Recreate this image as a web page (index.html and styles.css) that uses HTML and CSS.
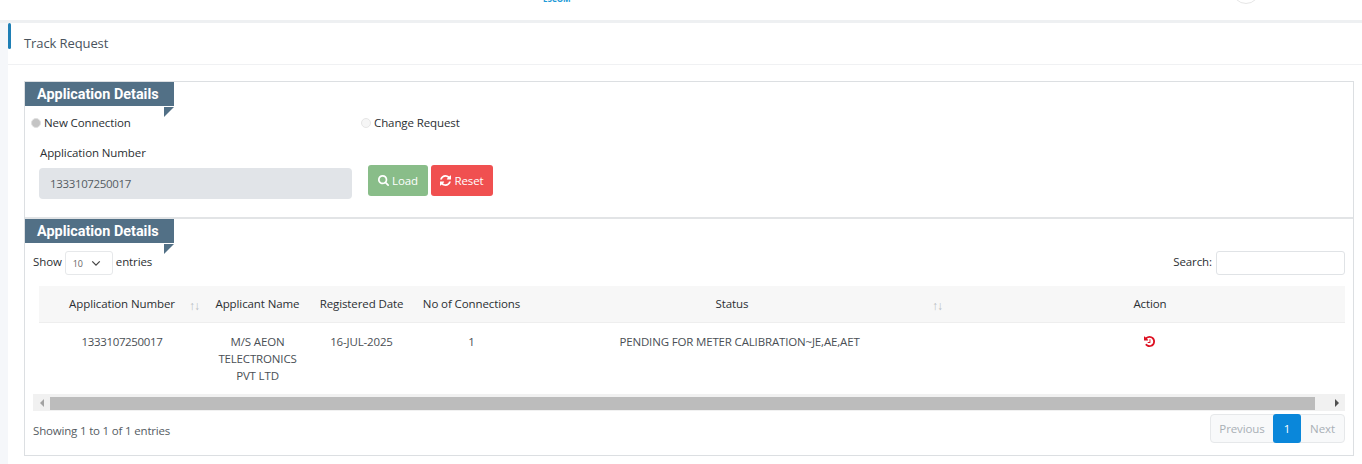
FILE: index.html
```html
<!DOCTYPE html>
<html lang="en">
<head>
    <meta charset="UTF-8">
    <meta name="viewport" content="width=device-width, initial-scale=1.0">
    <title>Track Request</title>
    <link rel="stylesheet" href="styles.css">
</head>
<body>
    <header class="topbar">
        <span class="logo-text">ESCOM</span>
        <span class="avatar"></span>
    </header>

    <div class="page">
        <main class="card">
            <div class="card-title">
                <span class="title-mark"></span>
                <h1>Track Request</h1>
            </div>

            <div class="panel">
                <section class="search-section">
                    <div class="ribbon"><h2>Application Details</h2></div>
                    <div class="radio-row">
                        <label class="radio-item radio-first"><span class="radio checked"></span>New Connection</label>
                        <label class="radio-item"><span class="radio"></span>Change Request</label>
                    </div>
                    <div class="form-row">
                        <div class="field">
                            <label class="field-label">Application Number</label>
                            <div class="field-input number-text">1333107250017</div>
                        </div>
                        <div class="actions">
                            <button class="btn btn-load">
                                <svg class="icon" viewBox="0 0 1664 1664"><path d="M1152 704q0-185-131.5-316.5t-316.5-131.5-316.5 131.5-131.5 316.5 131.5 316.5 316.5 131.5 316.5-131.5 131.5-316.5zm512 832q0 52-38 90t-90 38q-54 0-90-38l-343-342q-179 124-399 124-143 0-273.5-55.5t-225-150-150-225-55.5-273.5 55.5-273.5 150-225 225-150 273.5-55.5 273.5 55.5 225 150 150 225 55.5 273.5q0 220-124 399l343 343q37 37 37 90z"/></svg>
                                Load
                            </button>
                            <button class="btn btn-reset">
                                <svg class="icon" viewBox="0 0 1536 1536"><path d="M1511 928q0 5-1 7-64 268-268 434.5t-478 166.5q-146 0-282.5-55t-243.5-157l-129 129q-19 19-45 19t-45-19-19-45v-448q0-26 19-45t45-19h448q26 0 45 19t19 45-19 45l-137 137q71 66 161 102t187 36q134 0 250-65t186-179q11-17 53-117 8-23 30-23h192q13 0 22.5 9.5t9.5 22.5zm25-800v448q0 26-19 45t-45 19h-448q-26 0-45-19t-19-45 19-45l138-138q-148-137-349-137-134 0-250 65t-186 179q-11 17-53 117-8 23-30 23h-199q-13 0-22.5-9.5t-9.5-22.5v-7q65-268 270-434.5t480-166.5q146 0 284 55.5t245 156.5l130-129q19-19 45-19t45 19 19 45z"/></svg>
                                Reset
                            </button>
                        </div>
                    </div>
                </section>

                <section class="results-section">
                    <div class="ribbon"><h2>Application Details</h2></div>
                    <div class="table-tools">
                        <div class="length">
                            <span class="tool-text">Show</span>
                            <span class="length-select">10
                                <svg class="chevron" viewBox="0 0 12 8"><path d="M1.5 1.5 6 6l4.5-4.5"/></svg>
                            </span>
                            <span class="tool-text">entries</span>
                        </div>
                        <div class="search">
                            <label class="tool-text">Search:</label>
                            <span class="search-input"></span>
                        </div>
                    </div>

                    <div class="table-wrap">
                        <table class="data-table">
                            <thead>
                                <tr>
                                    <th class="col-number sortable">Application Number<span class="sort-arrows">↑↓</span></th>
                                    <th class="col-name">Applicant Name</th>
                                    <th class="col-date">Registered Date</th>
                                    <th class="col-count">No of Connections</th>
                                    <th class="col-status sortable">Status<span class="sort-arrows">↑↓</span></th>
                                    <th class="col-action">Action</th>
                                </tr>
                            </thead>
                            <tbody>
                                <tr>
                                    <td class="number-text">1333107250017</td>
                                    <td>M/S AEON TELECTRONICS PVT LTD</td>
                                    <td>16-JUL-2025</td>
                                    <td>1</td>
                                    <td class="status-cell">PENDING FOR METER CALIBRATION~JE,AE,AET</td>
                                    <td>
                                        <svg class="history" viewBox="0 0 1536 1536"><path d="M1536 768q0 156-61 298t-164 245-245 164-298 61q-172 0-327-72.5t-264-204.5q-7-10-6.5-22.5t8.5-20.5l137-138q10-9 25-9 16 2 23 12 73 95 179 147t225 52q104 0 198.5-40.5t163.5-109.5 109.5-163.5 40.5-198.5-40.5-198.5-109.5-163.5-163.5-109.5-198.5-40.5q-98 0-188 35.5t-160 101.5l137 138q31 30 14 69-17 40-59 40h-448q-26 0-45-19t-19-45v-448q0-42 40-59 39-17 69 14l130 129q107-101 244.5-156.5t284.5-55.5q156 0 298 61t245 164 164 245 61 298zm-640-288v448q0 14-9 23t-23 9h-320q-14 0-23-9t-9-23v-64q0-14 9-23t23-9h224v-352q0-14 9-23t23-9h64q14 0 23 9t9 23z"/></svg>
                                    </td>
                                </tr>
                            </tbody>
                        </table>
                    </div>

                    <div class="scrollbar">
                        <span class="arrow arrow-left"></span>
                        <span class="thumb"></span>
                        <span class="arrow arrow-right"></span>
                    </div>

                    <div class="table-footer">
                        <div class="info">Showing 1 to 1 of 1 entries</div>
                        <div class="pagination">
                            <a class="page-link link-prev">Previous</a>
                            <a class="page-link current">1</a>
                            <a class="page-link link-next">Next</a>
                        </div>
                    </div>
                </section>
            </div>
        </main>
    </div>
</body>
</html>
```

FILE: styles.css
```css
/* base */
html, body {
    height: 100%;
}

body {
    margin: 0;
    font-family: 'Open Sans', sans-serif;
    font-size: 11.5px;
    letter-spacing: -0.1px;
    color: #212529;
    background-color: #fff;
    overflow: hidden;
}

/* top header, mostly scrolled out of view */
.topbar {
    display: flex;
    height: 20px;
    overflow: hidden;
    border-bottom: 3px solid #eef0f2;
}

.logo-text {
    margin: -7px 0 0 543px;
    height: 12px;
    font-size: 8px;
    line-height: 12px;
    font-weight: 700;
    color: #1e9bd7;
}

.avatar {
    width: 26px;
    height: 26px;
    margin: -24px 102px 0 auto;
    border: 1px solid #e6e6e6;
    border-radius: 50%;
}

.page {
    padding-left: 8px;
    background-color: #f5f7fa;
    height: calc(100% - 23px);
}

.card {
    height: 100%;
    background-color: #fff;
    padding: 0 8px 0 16px;
    box-sizing: border-box;
}

.card-title {
    display: flex;
    height: 41px;
    margin: 0 -8px 16px -16px;
    border-bottom: 1px solid #f0f1f3;
}

.title-mark {
    width: 3px;
    height: 26px;
    background-color: #1f7fb5;
    border-radius: 2px;
}

.card-title h1 {
    margin: 0 0 0 13px;
    font-size: 13px;
    line-height: 41px;
    font-weight: 500;
    color: #49535d;
}

/* bordered box with both sections */
.panel {
    border: 1px solid #dcdfe2;
    height: 375px;
    box-sizing: border-box;
}

.ribbon {
    position: relative;
    width: 149px;
    height: 24px;
    background-color: #527086;
    color: #fff;
}

.ribbon h2 {
    margin: 0;
    padding-left: 12px;
    font-family: 'Roboto', sans-serif;
    font-size: 14.4px;
    line-height: 26px;
    font-weight: 700;
    letter-spacing: 0;
}

/* little fold under the ribbon */
.ribbon::after {
    content: "";
    position: absolute;
    right: 0;
    top: 25px;
    border-style: solid;
    border-width: 10px 10px 0 0;
    border-color: #527086 transparent transparent transparent;
}

.search-section {
    height: 135px;
    border-bottom: 2px solid #e2e4e6;
}

.radio-row {
    display: flex;
    height: 17px;
    margin-top: 8px;
    padding-left: 6px;
}

.radio-item {
    display: flex;
    align-items: center;
    gap: 3px;
    color: #2b2f33;
}

.radio-first {
    width: 330px;
}

.radio {
    box-sizing: border-box;
    width: 10px;
    height: 10px;
    border: 1px solid #e6e6e6;
    border-radius: 50%;
    background-color: #f6f6f6;
}

.radio.checked {
    background-color: #c4c4c4;
    border: 1px solid #e0e0e0;
}

.form-row {
    display: flex;
    padding-left: 14px;
    margin-top: 12px;
}

.field {
    width: 313px;
}

.field-label {
    display: block;
    height: 20px;
    line-height: 19px;
    padding-left: 1px;
    color: #2b2f33;
}

.field-input {
    height: 31px;
    margin-top: 5px;
    line-height: 31px;
    padding-left: 11px;
    background-color: #e1e4e8;
    border-radius: 4px;
    color: #555c63;
}

/* digits run narrower than the rest */
.number-text {
    letter-spacing: -0.35px;
}

.actions {
    display: flex;
    gap: 3px;
    margin: 22px 0 0 16px;
}

.btn {
    display: flex;
    align-items: center;
    justify-content: center;
    gap: 3px;
    height: 31px;
    padding: 0;
    border: none;
    border-radius: 3px;
    font-family: inherit;
    font-size: 11.5px;
    letter-spacing: -0.1px;
    color: #fff;
}

.btn-load {
    width: 60px;
    background-color: #89bd89;
}

.btn-reset {
    width: 62px;
    background-color: #f05050;
}

.icon {
    width: 11px;
    height: 11px;
    fill: #fff;
}

/* results */
.table-tools {
    display: flex;
    justify-content: space-between;
    padding: 8px 8px 0;
    height: 35px;
}

.length {
    display: flex;
    gap: 3px;
    color: #2b2f33;
}

.tool-text {
    line-height: 21px;
}

.length-select {
    display: flex;
    align-items: center;
    justify-content: space-between;
    box-sizing: border-box;
    width: 48px;
    height: 24px;
    padding: 0 11px 0 7px;
    border: 1px solid #e6e8ea;
    border-radius: 3px;
    font-size: 9px;
    color: #666;
}

.chevron {
    width: 10px;
    height: 7px;
    fill: none;
    stroke: #444;
    stroke-width: 1.5;
}

.search {
    display: flex;
    gap: 4px;
    color: #2b2f33;
}

.search-input {
    width: 127px;
    height: 22px;
    border: 1px solid #e0e3e6;
    border-radius: 3px;
}

.table-wrap {
    margin: 0 8px 0 14px;
}

.data-table {
    width: 100%;
    table-layout: fixed;
    border-collapse: collapse;
}

.data-table th {
    position: relative;
    height: 36px;
    padding: 0 4px;
    box-sizing: border-box;
    background-color: #f7f7f7;
    border-bottom: 1px solid #eeeeee;
    font-weight: 500;
    color: #2b2f33;
    text-align: center;
}

.data-table td {
    padding: 10px 10px 3px;
    height: 72px;
    box-sizing: border-box;
    line-height: 17px;
    text-align: center;
    vertical-align: top;
    letter-spacing: -0.16px;
    color: #4a4f55;
}

.data-table td.number-text {
    letter-spacing: -0.35px;
}

.col-number { width: 166px; }
.col-name { width: 105px; }
.col-date { width: 103px; }
.col-count { width: 117px; }
.col-status { width: 423px; }

.data-table th.col-status {
    padding-right: 23px;
}

.data-table th.col-action {
    padding-left: 6px;
}

.data-table td.status-cell {
    padding-right: 14px;
}

.sort-arrows {
    position: absolute;
    right: 6px;
    top: 13px;
    font-family: 'Liberation Sans', sans-serif;
    font-size: 12px;
    letter-spacing: -1px;
    color: #b9bec3;
}

.col-status .sort-arrows {
    right: 11px;
}

.history {
    width: 11px;
    height: 11px;
    margin-top: 3px;
    fill: #dd1122;
}

.scrollbar {
    display: flex;
    height: 17px;
    margin: 0 8px;
    background-color: #f1f1f1;
}

.thumb {
    flex: 1;
    height: 13px;
    margin-top: 3px;
    background-color: #bcbcbc;
}

.arrow {
    display: flex;
    align-items: center;
    justify-content: center;
    width: 17px;
}

.arrow::before {
    content: "";
    border-style: solid;
    border-width: 4px 0;
    border-color: transparent;
}

.arrow-left::before {
    border-right: 4px solid #a3a3a3;
}

.arrow-right {
    width: 30px;
}

.arrow-right::before {
    border-left: 4px solid #505050;
    margin-left: 14px;
}

.table-footer {
    display: flex;
    justify-content: space-between;
    padding: 3px 8px 0;
}

.info {
    padding-top: 9px;
    letter-spacing: -0.18px;
    color: #555c63;
}

.pagination {
    display: flex;
    height: 29px;
    width: 135px;
    border: 1px solid #e6e8ea;
    border-radius: 4px;
    box-sizing: border-box;
    background-color: #f8f9fa;
}

.page-link {
    display: block;
    text-align: center;
    line-height: 28px;
    color: #a9b0b6;
}

.link-prev {
    width: 62px;
}

.link-next {
    width: 43px;
}

.page-link.current {
    width: 28px;
    margin: -1px 0;
    height: 29px;
    line-height: 29px;
    background-color: #0a87da;
    border-radius: 3px;
    color: #fff;
}
```
